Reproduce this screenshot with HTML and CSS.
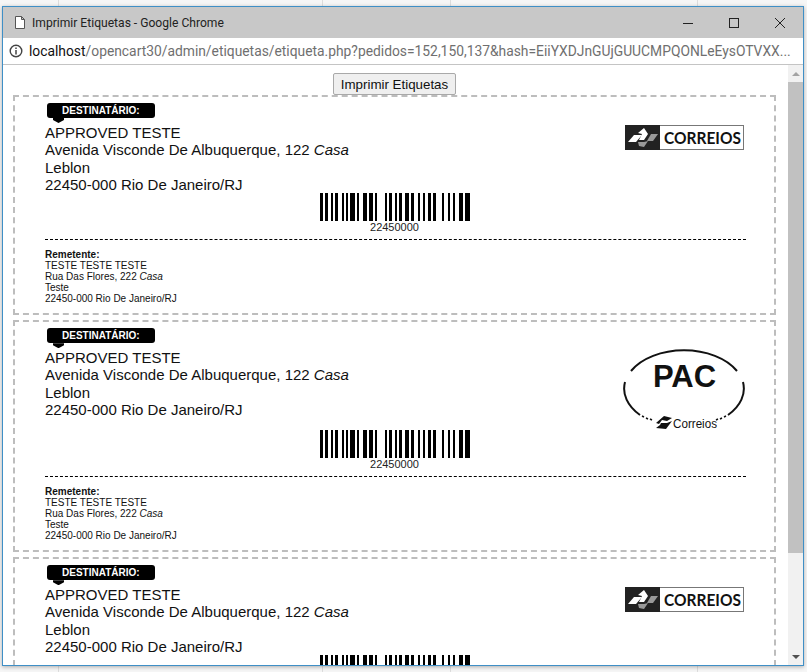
FILE: index.html
```html
<!DOCTYPE html>
<html lang="pt">
<head>
<meta charset="utf-8">
<title>Imprimir Etiquetas</title>
<link rel="stylesheet" href="styles.css">
</head>
<body>
<svg class="defs" width="0" height="0" aria-hidden="true">
  <symbol id="barcode" viewBox="0 0 150 28">
    <g class="bars">
      <rect x="0" width="3" height="28"/><rect x="5" width="3" height="28"/><rect x="11" width="2" height="28"/><rect x="15" width="3" height="28"/>
      <rect x="22" width="2" height="28"/><rect x="26" width="2" height="28"/><rect x="30" width="5" height="28"/><rect x="37" width="2" height="28"/>
      <rect x="43" width="4" height="28"/><rect x="49" width="4" height="28"/><rect x="55" width="2" height="28"/><rect x="65" width="2" height="28"/>
      <rect x="69" width="3" height="28"/><rect x="75" width="2" height="28"/><rect x="79" width="3" height="28"/><rect x="85" width="4" height="28"/>
      <rect x="91" width="3" height="28"/><rect x="98" width="2" height="28"/><rect x="103" width="2" height="28"/><rect x="108" width="3" height="28"/>
      <rect x="113" width="3" height="28"/><rect x="122" width="2" height="28"/><rect x="128" width="2" height="28"/><rect x="133" width="2" height="28"/>
      <rect x="139" width="4" height="28"/><rect x="145" width="5" height="28"/>
    </g>
  </symbol>
  <symbol id="correios" viewBox="0 0 119 25">
    <rect x="0" y="0" width="119" height="25" fill="#777"/>
    <rect x="35" y="1" width="83" height="23" fill="#fff"/>
    <rect x="0" y="0" width="35" height="25" fill="#222"/>
    <polygon points="3,17 9,10 17,10 11,17" fill="#fff"/>
    <polygon points="13,8 19,3 23,9 19,15 14,15 17,9" fill="#fff"/>
    <polygon points="13,17 19,17 23,16 19,22 14,21" fill="#999"/>
    <polygon points="22,16 26,9 33,9 28,16" fill="#999"/>
    <text x="39" y="19" class="correios-word" textLength="77" lengthAdjust="spacingAndGlyphs">CORREIOS</text>
  </symbol>
  <symbol id="pac" viewBox="0 0 123 85">
    <g class="pac-ring">
      <path d="M8 26A60 39 0 0 1 114 26"/>
      <path d="M2 37A60 39 0 0 0 17 70"/>
      <path d="M120 37A60 39 0 0 1 105 70"/>
      <path class="pac-dots" d="M19 71l2 1M23 73l2 1M27 74l2 1M103 71l-2 1M99 73l-2 1M95 74l-2 1"/>
    </g>
    <text x="61.500" y="42" class="pac-word" text-anchor="middle">PAC</text>
    <polygon points="33,78 41,71 49,73 44,76 39,75 36,79" fill="#111"/>
    <polygon points="38,78 44,78 49,76 43,84 33,83 37,80" fill="#111"/>
    <text x="50" y="83" class="pac-small" textLength="44" lengthAdjust="spacingAndGlyphs">Correios</text>
  </symbol>
</svg>

<main class="window">
  <header class="titlebar">
    <svg class="page-icon" width="10" height="13" viewBox="0 0 10 13"><path d="M.5.5h6l3 3v9h-9zM6.5.5v3h3" fill="#fff" stroke="#555"/></svg>
    <span class="title">Imprimir Etiquetas - Google Chrome</span>
    <div class="controls">
      <svg width="12" height="12" viewBox="0 0 12 12"><path d="M1 6.500h10" stroke="#222"/></svg>
      <svg width="12" height="12" viewBox="0 0 12 12"><rect x="1.500" y="1.500" width="9" height="9" fill="none" stroke="#222"/></svg>
      <svg width="12" height="12" viewBox="0 0 12 12"><path d="M1 1l10 10M11 1L1 11" stroke="#222" fill="none"/></svg>
    </div>
  </header>
  <div class="addressbar">
    <svg class="info-icon" width="14" height="14" viewBox="0 0 14 14"><circle cx="7" cy="7" r="5.800" fill="none" stroke="#444" stroke-width="1.400"/><path d="M7 6v4.500M7 3.500v1.500" stroke="#444" stroke-width="1.500"/></svg>
    <span class="url"><span class="host">localhost</span>/opencart30/admin/etiquetas/etiqueta.php?pedidos=152,150,137&amp;hash=EiiYXDJnGUjGUUCMPQONLeEysOTVXX...</span>
  </div>
  <div class="viewport">
    <div class="page">
      <div class="actions"><button class="print-btn" type="button">Imprimir Etiquetas</button></div>

      <section class="label">
        <div class="label-head">
          <div class="recipient">
            <div class="pill">DESTINATÁRIO:</div>
            <address class="addr">APPROVED TESTE<br>Avenida Visconde De Albuquerque, 122 <em>Casa</em><br>Leblon<br>22450-000 Rio De Janeiro/RJ</address>
          </div>
          <svg class="logo-correios" width="119" height="25"><use href="#correios"/></svg>
        </div>
        <div class="barcode"><svg width="150" height="28"><use href="#barcode"/></svg><div class="barcode-num">22450000</div></div>
        <div class="sender"><strong>Remetente:</strong><br>TESTE TESTE TESTE<br>Rua Das Flores, 222 <em>Casa</em><br>Teste<br>22450-000 Rio De Janeiro/RJ</div>
      </section>

      <section class="label">
        <div class="label-head">
          <div class="recipient">
            <div class="pill">DESTINATÁRIO:</div>
            <address class="addr">APPROVED TESTE<br>Avenida Visconde De Albuquerque, 122 <em>Casa</em><br>Leblon<br>22450-000 Rio De Janeiro/RJ</address>
          </div>
          <svg class="logo-pac" width="123" height="85"><use href="#pac"/></svg>
        </div>
        <div class="barcode"><svg width="150" height="28"><use href="#barcode"/></svg><div class="barcode-num">22450000</div></div>
        <div class="sender"><strong>Remetente:</strong><br>TESTE TESTE TESTE<br>Rua Das Flores, 222 <em>Casa</em><br>Teste<br>22450-000 Rio De Janeiro/RJ</div>
      </section>

      <section class="label">
        <div class="label-head">
          <div class="recipient">
            <div class="pill">DESTINATÁRIO:</div>
            <address class="addr">APPROVED TESTE<br>Avenida Visconde De Albuquerque, 122 <em>Casa</em><br>Leblon<br>22450-000 Rio De Janeiro/RJ</address>
          </div>
          <svg class="logo-correios" width="119" height="25"><use href="#correios"/></svg>
        </div>
        <div class="barcode"><svg width="150" height="28"><use href="#barcode"/></svg><div class="barcode-num">22450000</div></div>
      </section>
    </div>
    <div class="scrollbar">
      <div class="arrow arrow-up"></div>
      <div class="thumb"></div>
      <div class="arrow arrow-down"></div>
    </div>
  </div>
</main>
</body>
</html>
```

FILE: styles.css
```css
* { box-sizing: border-box; }

html, body { height: 100%; }

body {
  margin: 0;
  padding: 6px 3px 6px 2px;
  overflow: hidden;
  background-color: #f6f6f6;
  background-image:
    linear-gradient(#ddd, #ddd), linear-gradient(#ddd, #ddd),
    linear-gradient(#ddd, #ddd), linear-gradient(#ddd, #ddd);
  background-size: 1px 100%;
  background-repeat: no-repeat;
  background-position: 58px 0, 322px 0, 450px 0, 697px 0;
  font-family: "Liberation Sans", Arial, sans-serif;
}

.defs { position: absolute; }

.window {
  display: flex;
  flex-direction: column;
  height: 660px;
  background: #fff;
  border: 1px solid #3f8fc6;
  box-shadow: 0 1px 4px rgba(0, 0, 0, .3);
}

.titlebar {
  display: flex;
  align-items: center;
  flex: none;
  height: 31px;
  padding-left: 12px;
  background: #c8c8c8;
}

.page-icon { margin-right: 7px; }

.title {
  font: 12.1px Roboto, sans-serif;
  color: #222;
}

.controls {
  display: flex;
  gap: 34px;
  margin-left: auto;
  padding-right: 17px;
}

.addressbar {
  display: flex;
  align-items: center;
  flex: none;
  height: 27px;
  padding-left: 6px;
  background: #fff;
  border-bottom: 1px solid #c4c4c4;
  overflow: hidden;
}

.info-icon { flex: none; margin-right: 6px; }

.url {
  font: 13.84px Roboto, sans-serif;
  color: #6f6f6f;
  white-space: nowrap;
}

.host { color: #111; }

.viewport {
  display: flex;
  flex: 1;
  min-height: 0;
  overflow: hidden;
}

.page {
  flex: 1;
  min-width: 0;
  overflow: hidden;
  padding: 0 10px;
}

.actions {
  display: flex;
  justify-content: center;
  height: 30px;
  padding-top: 8px;
  padding-right: 2px;
  position: relative;
  z-index: 1;
}

.print-btn {
  width: 123px;
  height: 22px;
  padding: 0;
  font: 13.33px "Liberation Sans", Arial, sans-serif;
  color: #111;
  background: #efefef;
  border: 1px solid #a9a9a9;
  border-radius: 2px;
}

.label {
  width: 763px;
  margin-bottom: 5px;
  padding: 6px 28px 0 30px;
  border: 2px dashed #bdbdbd;
  color: #111;
}

.label-head {
  display: flex;
  justify-content: space-between;
  align-items: flex-start;
}

.pill {
  position: relative;
  width: 108px;
  height: 15px;
  margin-left: 2px;
  margin-bottom: 6px;
  padding-left: 15px;
  background: #000;
  border-radius: 3px;
  color: #fff;
  font-size: 10px;
  font-weight: bold;
  line-height: 15px;
}

.pill::after {
  content: "";
  position: absolute;
  left: 6px;
  top: 15px;
  width: 11px;
  height: 5px;
  background: #000;
  clip-path: polygon(0 0, 100% 0, 100% 40%, 50% 100%, 0 40%);
}

.addr {
  font-size: 15px;
  font-style: normal;
  line-height: 17.3px;
}

.logo-correios { margin-top: 22px; margin-right: 2px; }

.logo-pac { margin-top: 17px; }

.correios-word {
  font: bold 17px "Lato", sans-serif;
  fill: #111;
}

.pac-ring path { fill: none; stroke: #111; stroke-width: 2; }

.pac-ring .pac-dots { stroke-width: 1.500; }

.pac-word {
  font: bold 31px "Liberation Sans", sans-serif;
  fill: #111;
}

.pac-small {
  font: 12px "Liberation Sans", sans-serif;
  fill: #111;
}

.barcode {
  padding-right: 2px;
  text-align: center;
  line-height: 0;
}

.barcode svg { display: block; margin: 0 auto; }

.bars rect { fill: #000; }

.barcode-num {
  font-size: 11px;
  line-height: 12px;
  color: #222;
}

.sender {
  margin-top: 6px;
  padding: 9px 0 9px;
  border-top: 1px dashed #000;
  font-size: 10px;
  line-height: 11px;
}

.scrollbar {
  display: flex;
  flex-direction: column;
  flex: none;
  width: 15px;
  background: #f1f1f1;
}

.arrow { flex: none; height: 17px; position: relative; }

.arrow::after {
  content: "";
  position: absolute;
  left: 4px;
  top: 7px;
  border-left: 4px solid transparent;
  border-right: 4px solid transparent;
}

.arrow-up::after { border-bottom: 4px solid #a3a3a3; }

.arrow-down::after { border-top: 4px solid #505050; }

.thumb {
  flex: none;
  height: 471px;
  background: #c1c1c1;
}

.arrow-down { margin-top: auto; }
```
